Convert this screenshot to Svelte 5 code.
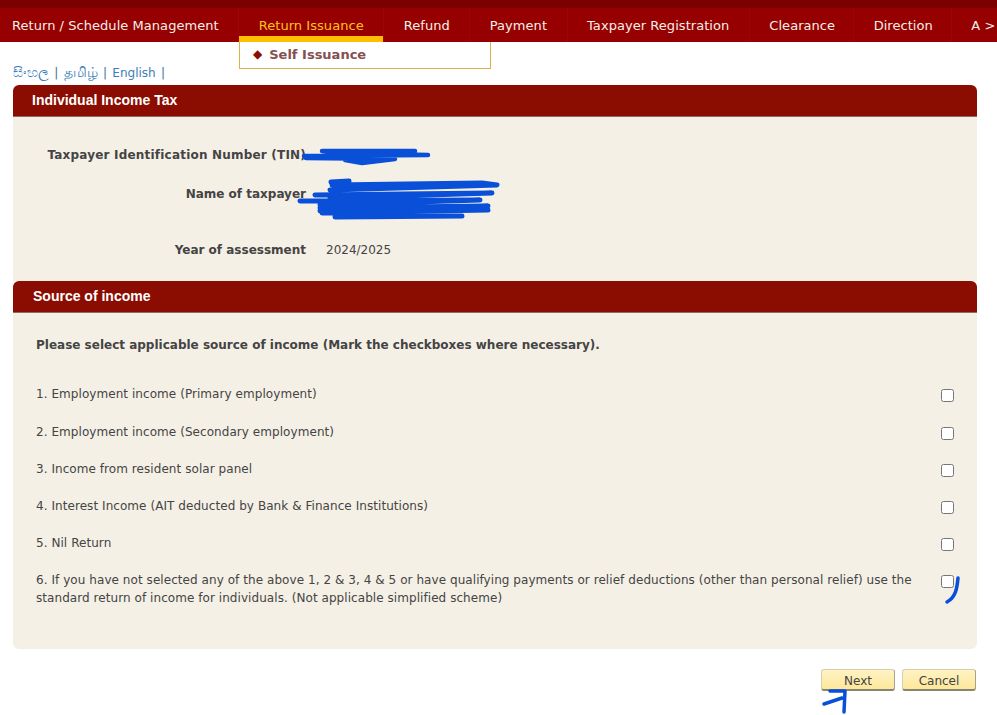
<script lang="ts">
	const menu = ['Return / Schedule Management', 'Return Issuance', 'Refund', 'Payment', 'Taxpayer Registration', 'Clearance', 'Direction', 'A >'];
	const activeMenu = 'Return Issuance';

	const details = [
		{ label: 'Taxpayer Identification Number (TIN)', value: '' },
		{ label: 'Name of taxpayer', value: '' },
		{ label: 'Year of assessment', value: '2024/2025' }
	];

	const sources = [
		'1. Employment income (Primary employment)',
		'2. Employment income (Secondary employment)',
		'3. Income from resident solar panel',
		'4. Interest Income (AIT deducted by Bank & Finance Institutions)',
		'5. Nil Return',
		'6. If you have not selected any of the above 1, 2 & 3, 4 & 5 or have qualifying payments or relief deductions (other than personal relief) use the standard return of income for individuals. (Not applicable simplified scheme)'
	];
</script>

<div class="page">
	<nav class="menu">
		{#each menu as item}
			<a href="#top" class="menu__item" class:menu__item--active={item === activeMenu}>{item}</a>
		{/each}
		<div class="submenu"><span class="submenu__mark">◆</span>Self Issuance</div>
	</nav>

	<div class="langs">
		<a href="#si" class="langs__native">සිංහල</a> | <a href="#ta" class="langs__native">தமிழ்</a> | <a href="#en">English</a> |
	</div>

	<section class="panel">
		<h2 class="panel__head">Individual Income Tax</h2>
		<div class="panel__body details">
			{#each details as row}
				<div class="details__row">
					<div class="details__label">{row.label}</div>
					<div class="details__value">{row.value}</div>
				</div>
			{/each}
		</div>
		<h2 class="panel__head panel__head--second">Source of income</h2>
		<div class="panel__body sources">
			<p class="sources__intro">Please select applicable source of income (Mark the checkboxes where necessary).</p>
			{#each sources as text}
				<label class="source">
					<span class="source__text">{text}</span>
					<input type="checkbox" />
				</label>
			{/each}
		</div>
	</section>

	<div class="actions">
		<button type="button">Next</button>
		<button type="button">Cancel</button>
	</div>

	<!-- blue pen marks drawn over the screenshot -->
	<svg class="scribble" width="997" height="715" viewBox="0 0 997 715" fill="none" stroke="#0a4fd8" stroke-linecap="round" stroke-linejoin="round">
		<g stroke-width="4.5">
			<path d="M304 156 L428 155 L340 153 L322 151 L415 151 M306 158 L395 159 L362 163 L345 160" />
		</g>
		<g stroke-width="5">
			<path d="M331 182 L349 181 M332 185 L482 183 L497 185 L330 190 M315 195 L492 193 L330 198 M300 201 L480 200 L320 205 M320 208 L488 206 L320 211 M322 213 L488 210 M335 217 L462 216" />
		</g>
		<path d="M958 578 C957 588 956 597 947 602" stroke-width="3.5" />
		<path d="M824 704 L842 698 M830 691 L845 691 L844 712" stroke-width="3.5" />
	</svg>
</div>

<style>
	:global(body) {
		margin: 0;
		background: #fff;
	}

	.page {
		position: relative;
		height: 715px;
		overflow: hidden;
		font-family: 'DejaVu Sans', Verdana, sans-serif;
		font-size: 12px;
		color: #444;
	}

	.menu {
		position: relative;
		display: flex;
		height: 34px;
		background: #960000;
		border-top: 8px solid #7c0000;
		white-space: nowrap;
	}

	.menu__item {
		display: flex;
		align-items: center;
		padding: 0 19.5px;
		color: #f5f0e8;
		font-size: 13px;
		letter-spacing: 0.05px;
		text-decoration: none;
		border-right: 1px solid #9c0606;
	}

	.menu__item:first-child {
		padding-left: 12px;
	}

	.menu__item:nth-child(6),
	.menu__item:nth-child(7) {
		padding-right: 18px;
	}

	.menu__item--active {
		color: #ffc21a;
		box-shadow: inset 0 -6px 0 #ffbe00;
	}

	.submenu {
		position: absolute;
		left: 239px;
		top: 34px;
		box-sizing: border-box;
		width: 252px;
		height: 27px;
		padding-left: 13px;
		background: #fff;
		border: 1px solid #dcb04a;
		border-top: none;
		color: #855050;
		font-size: 13px;
		font-weight: bold;
		line-height: 25px;
	}

	.submenu__mark {
		margin-right: 7px;
		color: #8b0c00;
		font-size: 12px;
		vertical-align: 1px;
	}

	.langs {
		height: 43px;
		padding: 22px 0 0 13px;
		box-sizing: border-box;
		color: #3b6f9c;
		line-height: 16px;
		word-spacing: 1.5px;
	}

	.langs a {
		color: #3b80b8;
		text-decoration: none;
	}

	.langs .langs__native {
		font-size: 14.4px;
	}

	.panel {
		margin: 0 20px 0 13px;
	}

	.panel__head {
		box-sizing: border-box;
		height: 32px;
		margin: 0;
		padding-left: 19px;
		background: #8b0c00;
		border-bottom: 1px solid #8f6a60;
		border-radius: 6px 6px 0 0;
		color: #fff;
		font-family: 'Liberation Sans', Arial, sans-serif;
		font-size: 14px;
		font-weight: bold;
		line-height: 31px;
	}

	.panel__head--second {
		padding-left: 20px;
	}

	.panel__body {
		background: #f5f0e6;
	}

	.details {
		height: 164px;
		padding-top: 30px;
		box-sizing: border-box;
	}

	.details__row {
		display: grid;
		grid-template-columns: 293px 1fr;
		column-gap: 20px;
		height: 16px;
		line-height: 16px;
		margin-bottom: 23px;
	}

	.details__row:nth-child(2) {
		margin-bottom: 40px;
	}

	.details__row:first-child .details__label {
		letter-spacing: 0.2px;
	}

	.details__label {
		font-weight: bold;
		text-align: right;
		white-space: nowrap;
	}

	.sources {
		height: 336px;
		box-sizing: border-box;
		padding: 24px 23px 0 23px;
		border-radius: 0 0 6px 6px;
	}

	.sources__intro {
		margin: 0 0 32px;
		font-weight: bold;
		line-height: 16px;
	}

	.source {
		display: flex;
		justify-content: space-between;
		align-items: flex-start;
		min-height: 37px;
		line-height: 18px;
		letter-spacing: 0.06px;
	}

	.source:nth-child(2) {
		min-height: 38px;
	}

	.source__text {
		width: 885px;
	}

	input {
		width: 13px;
		height: 13px;
		margin: 4px 0 0;
	}

	.actions {
		display: flex;
		justify-content: flex-end;
		gap: 7px;
		margin: 20px 21px 0 0;
	}

	button {
		box-sizing: border-box;
		width: 74px;
		height: 22px;
		padding: 3px 0 0;
		background: linear-gradient(#fff3c4, #fde79a);
		border: 1px solid #d8cfae;
		border-bottom: 2px solid #8a8570;
		border-right-color: #a8a288;
		border-radius: 3px;
		color: #444;
		font-family: 'DejaVu Sans', Verdana, sans-serif;
		font-size: 12px;
	}

	.scribble {
		position: absolute;
		left: 0;
		top: 0;
		pointer-events: none;
	}
</style>
